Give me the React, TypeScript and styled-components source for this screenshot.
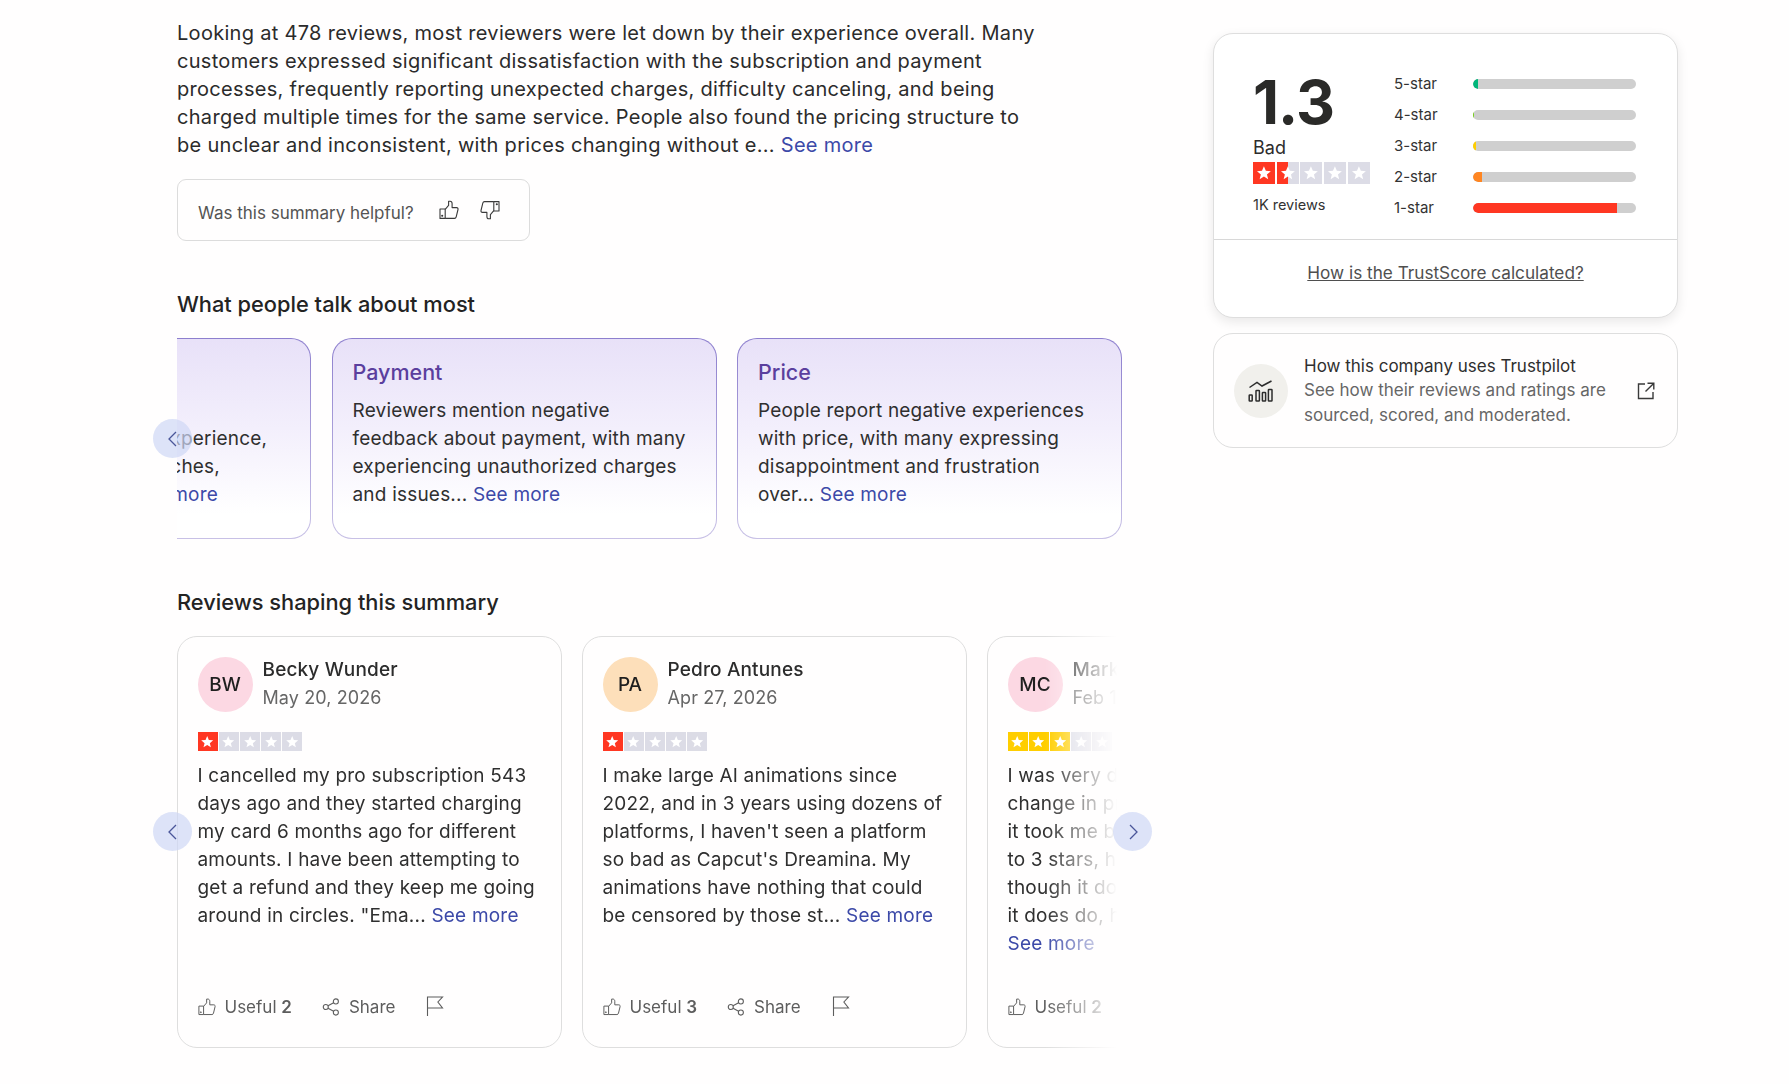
import React from "react";
import styled, { createGlobalStyle } from "styled-components";

const Global = createGlobalStyle`
  html, body { margin: 0; padding: 0; background: #fffefe; overflow: hidden; }
  body { font-family: Inter, "Liberation Sans", sans-serif; color: #2a2a2a; }
  * { box-sizing: border-box; }
`;

const Page = styled.div`
  display: flex;
  width: 1789px;
  height: 1084px;
  padding-left: 177px;
`;
const LeftColumn = styled.main`
  width: 945px;
  padding-top: 19px;
  flex: none;
`;
const RightColumn = styled.aside`
  width: 465px;
  margin-left: 91px;
  padding-top: 33px;
  flex: none;
`;
const Summary = styled.p`
  margin: 0;
  width: 866px;
  font-size: 20px;
  letter-spacing: 0.3px;
  line-height: 28px;
  color: #2b2b2b;
`;
const Link = styled.a`
  color: #3c49a8;
`;
const Feedback = styled.div`
  margin-top: 20px;
  width: 353px;
  height: 62px;
  border: 1px solid #dcdcdc;
  border-radius: 9px;
  display: flex;
  align-items: center;
  padding-left: 20px;
`;
const FeedbackText = styled.span`
  font-size: 17px;
  color: #545454;
  padding-top: 5px;
  width: 241px;
`;
const FeedbackIcon = styled.span`
  display: flex;
  width: 41px;
  color: #3a3a3a;
`;
const Heading = styled.h2`
  margin: 49px 0 0;
  font-size: 21.8px;
  line-height: 28px;
  font-weight: 500;
  color: #232323;
`;
const TopicViewport = styled.div`
  position: relative;
  margin-top: 20px;
  width: 947px;
`;
const TopicClip = styled.div`
  overflow: hidden;
`;
const TopicRow = styled.div`
  display: flex;
  gap: 20.5px;
  margin-left: -251px;
`;
const TopicCard = styled.article`
  flex: none;
  width: 385px;
  height: 201px;
  padding: 19px 20px 20px;
  border-radius: 20px;
  border: 1px solid transparent;
  background:
    linear-gradient(180deg, #e8e1f8 0%, #f3effc 45%, #ffffff 88%) padding-box,
    linear-gradient(180deg, #8d7fce 0%, #c8c1e6 100%) border-box;
`;
const TopicTitle = styled.h3`
  margin: 0;
  height: 28px;
  font-size: 21.5px;
  line-height: 28px;
  font-weight: 500;
  color: #5b3f9e;
`;
const TopicText = styled.p`
  margin: 11px 0 0;
  font-size: 19px;
  letter-spacing: 0.2px;
  line-height: 28px;
  color: #2f2f2f;
`;
const ClippedLine = styled.span<{ $width: number }>`
  display: block;
  width: ${(p) => p.$width}px;
  text-align: right;
  white-space: nowrap;
`;
const Arrow = styled.button<{ $side: "left" | "right"; $x: number; $y: number }>`
  position: absolute;
  ${(p) => p.$side}: ${(p) => p.$x}px;
  top: ${(p) => p.$y}px;
  width: 39px;
  height: 39px;
  border: 0;
  padding: 0;
  border-radius: 50%;
  background: rgba(206, 215, 245, 0.7);
  color: #4a5699;
  display: flex;
  align-items: center;
  justify-content: center;
`;
const ReviewViewport = styled.div`
  position: relative;
  margin-top: 20px;
`;
const ReviewClip = styled.div`
  width: 940px;
  overflow: hidden;
  -webkit-mask-image: linear-gradient(90deg, #000 0, #000 868px, transparent 940px);
  mask-image: linear-gradient(90deg, #000 0, #000 868px, transparent 940px);
`;
const ReviewRow = styled.div`
  display: flex;
  gap: 20px;
`;
const ReviewCard = styled.article`
  flex: none;
  width: 385px;
  height: 412px;
  border: 1px solid #dedede;
  border-radius: 20px;
  padding: 19px 19px 26px 19.5px;
  display: flex;
  flex-direction: column;
`;
const ReviewHeader = styled.header`
  display: flex;
  align-items: center;
  gap: 10px;
`;
const Avatar = styled.div<{ $bg: string }>`
  width: 55px;
  height: 55px;
  border-radius: 50%;
  background: ${(p) => p.$bg};
  display: flex;
  align-items: center;
  justify-content: center;
  font-size: 19px;
  font-weight: 500;
  color: #1f1f1f;
  flex: none;
`;
const Name = styled.div`
  font-size: 19px;
  letter-spacing: 0.15px;
  line-height: 28px;
  font-weight: 500;
  color: #2c2c2c;
  white-space: nowrap;
`;
const DateLine = styled.div`
  font-size: 18px;
  letter-spacing: 0.1px;
  line-height: 28px;
  color: #666;
  white-space: nowrap;
`;
const StarRow = styled.div<{ $size: number; $gap: number; $mt: number; $h: number }>`
  display: flex;
  gap: ${(p) => p.$gap}px;
  margin-top: ${(p) => p.$mt}px;
  & > div {
    width: ${(p) => p.$size}px;
    height: ${(p) => p.$h}px;
  }
`;
const StarBox = styled.div<{ $fill: string }>`
  background: ${(p) => p.$fill};
  display: flex;
  align-items: center;
  justify-content: center;
`;
const ReviewText = styled.p`
  margin: 11px 0 0;
  font-size: 19px;
  letter-spacing: 0.2px;
  line-height: 28px;
  color: #2f2f2f;
`;
const ReviewFooter = styled.footer`
  margin-top: auto;
  display: flex;
  align-items: center;
  height: 28px;
  font-size: 17px;
  color: #5d5d5d;
`;
const FooterAction = styled.span<{ $mr: number }>`
  display: flex;
  align-items: center;
  gap: 9px;
  margin-right: ${(p) => p.$mr}px;
  white-space: nowrap;
  & b {
    font-weight: 600;
  }
`;
const FlagIcon = styled.span`
  display: flex;
  margin-top: -3px;
`;
const ScoreCard = styled.section`
  height: 285px;
  border: 1px solid #dedede;
  border-radius: 20px;
  box-shadow: 0 4px 12px rgba(0, 0, 0, 0.09);
  background: #fff;
  display: flex;
  flex-direction: column;
`;
const ScoreTop = styled.div`
  height: 206px;
  border-bottom: 1px solid #d8d8d8;
  display: flex;
  padding-left: 39px;
`;
const ScoreLeft = styled.div`
  width: 141px;
  padding-top: 37px;
  flex: none;
`;
const ScoreValue = styled.div`
  font-size: 60.5px;
  line-height: 62px;
  font-weight: 700;
  letter-spacing: -1px;
  color: #2a2a28;
`;
const ScoreWord = styled.div`
  margin-top: 3px;
  font-size: 18px;
  line-height: 24px;
  color: #2c2c2c;
`;
const ScoreCount = styled.div`
  margin-top: 11px;
  font-size: 14.5px;
  line-height: 20px;
  color: #333;
`;
const Bars = styled.div`
  padding-top: 34px;
`;
const BarRow = styled.div`
  display: flex;
  align-items: center;
  height: 31px;
`;
const BarLabel = styled.span`
  width: 79px;
  font-size: 15px;
  color: #333;
`;
const BarTrack = styled.div`
  width: 163px;
  height: 10px;
  border-radius: 5px;
  background: #cfcfcf;
  overflow: hidden;
`;
const BarFill = styled.div<{ $color: string; $w: number }>`
  height: 100%;
  width: ${(p) => p.$w}px;
  background: ${(p) => p.$color};
  border-radius: 5px 0 0 5px;
`;
const ScoreLinkArea = styled.div`
  flex: 1;
  display: flex;
  align-items: center;
  justify-content: center;
  padding-bottom: 12px;
`;
const ScoreLink = styled.a`
  font-size: 17.2px;
  color: #4f4f4f;
  text-decoration: underline;
`;
const InfoCard = styled.section`
  margin-top: 15px;
  height: 115px;
  border: 1px solid #dedede;
  border-radius: 20px;
  display: flex;
  align-items: center;
  padding: 0 15px 0 20px;
`;
const InfoBadge = styled.div`
  width: 54px;
  height: 54px;
  border-radius: 50%;
  background: #f1f0ec;
  display: flex;
  align-items: center;
  justify-content: center;
  flex: none;
`;
const InfoText = styled.div`
  margin-left: 16px;
  width: 333px;
  flex: none;
  font-size: 17px;
  line-height: 24.5px;
  color: #666;
`;
const InfoTitle = styled.div`
  color: #2f2f2f;
`;
const InfoExternal = styled.span`
  display: flex;
  color: #3a3a3a;
`;

const Star = () => (
  <svg viewBox="0 0 24 24" width="72%" height="72%" fill="#fff">
    <path d="M12 1.8l2.9 7.1 7.6.5-5.9 4.9 1.9 7.4L12 17.6l-6.5 4.1 1.9-7.4L1.5 9.4l7.6-.5z" />
  </svg>
);

const Stars = ({ on, color, half, size, h, gap, mt }: { on: number; color: string; half?: boolean; size: number; h: number; gap: number; mt: number }) => (
  <StarRow $size={size} $h={h} $gap={gap} $mt={mt}>
    {[0, 1, 2, 3, 4].map((i) => (
      <StarBox
        key={i}
        $fill={
          i < on
            ? color
            : half && i === on
              ? `linear-gradient(90deg, ${color} 50%, #dcdce6 50%)`
              : "#dcdce6"
        }
      >
        <Star />
      </StarBox>
    ))}
  </StarRow>
);

const Thumb = ({ size = 20, down = false }: { size?: number; down?: boolean }) => (
  <svg
    viewBox="0 0 20 20"
    width={size}
    height={size}
    fill="none"
    stroke="currentColor"
    strokeWidth="1.1"
    strokeLinejoin="round"
    transform={down ? "rotate(180)" : undefined}
  >
    <path d="M1 9h5.2v9.4H1z" />
    <path d="M6.2 9.3L9.6 5.4V1.2h1.5c1.1 0 2 1 2 2.4V7.6h4.5c1 0 1.6.9 1.4 1.9l-1.8 7.4c-.2.9-.8 1.5-1.7 1.5H6.2" />
    <circle cx="3.2" cy="15.8" r=".5" fill="currentColor" />
  </svg>
);

const Share = () => (
  <svg viewBox="0 0 20 20" width="18" height="18" fill="none" stroke="#5d5d5d" strokeWidth="1.2">
    <circle cx="4.2" cy="10" r="2.8" />
    <circle cx="15.4" cy="3.8" r="2.8" />
    <circle cx="15.4" cy="16.2" r="2.8" />
    <path d="M6.7 8.7l6.2-3.5M6.7 11.3l6.2 3.5" />
  </svg>
);

const Flag = () => (
  <svg viewBox="0 0 18 20" width="18" height="20" fill="none" stroke="#5d5d5d" strokeWidth="1.1">
    <path d="M1.5 20V1h15l-4.6 5 4.6 6H1.5" />
  </svg>
);

const Chevron = ({ right = false }: { right?: boolean }) => (
  <svg viewBox="0 0 12 20" width="12" height="20" fill="none" stroke="currentColor" strokeWidth="1.3">
    <path d={right ? "M3 3l7 7-7 7" : "M9 3l-7 7 7 7"} />
  </svg>
);

const ChartIcon = () => (
  <svg viewBox="0 0 26 22" width="26" height="22" fill="none" stroke="#2c2c2c" strokeWidth="1.5">
    <path d="M1.5 7.5L9 2.5l5 3.5 9.5-5" />
    <rect x="1.2" y="15" width="3" height="6" rx="0.6" />
    <rect x="8" y="10.5" width="3.4" height="10.5" rx="0.6" />
    <rect x="14.4" y="12.5" width="3.2" height="8.5" rx="0.6" />
    <rect x="20.4" y="9.5" width="3.6" height="11.5" rx="0.6" />
  </svg>
);

const External = () => (
  <svg viewBox="0 0 18 18" width="18" height="18" fill="none" stroke="currentColor" strokeWidth="1.4">
    <path d="M8 2H1.5v14.5H16V10" />
    <path d="M10.5 1.2h6.3v6.3M16.6 1.4L8.5 9.5" />
  </svg>
);

const bars = [
  { label: "5-star", color: "#00b67a", w: 5 },
  { label: "4-star", color: "#73cf11", w: 1 },
  { label: "3-star", color: "#ffce00", w: 3 },
  { label: "2-star", color: "#ff8622", w: 9 },
  { label: "1-star", color: "#ff3722", w: 144 },
];

const Footer = ({ n }: { n: number }) => (
  <ReviewFooter>
    <FooterAction $mr={30}>
      <Thumb size={18} />
      <span>
        Useful <b>{n}</b>
      </span>
    </FooterAction>
    <FooterAction $mr={31}>
      <Share />
      <span>Share</span>
    </FooterAction>
    <FlagIcon>
      <Flag />
    </FlagIcon>
  </ReviewFooter>
);

export default function App() {
  return (
    <Page>
      <Global />
      <LeftColumn>
        <Summary>
          Looking at 478 reviews, most reviewers were let down by their experience overall. Many customers expressed
          significant dissatisfaction with the subscription and payment processes, frequently reporting unexpected
          charges, difficulty canceling, and being charged multiple times for the same service. People also found the
          pricing structure to be unclear and inconsistent, with prices changing without e... <Link>See more</Link>
        </Summary>
        <Feedback>
          <FeedbackText>Was this summary helpful?</FeedbackText>
          <FeedbackIcon>
            <Thumb />
          </FeedbackIcon>
          <FeedbackIcon>
            <Thumb down />
          </FeedbackIcon>
        </Feedback>
        <Heading>What people talk about most</Heading>
        <TopicViewport>
          <TopicClip>
            <TopicRow>
              <TopicCard>
                <TopicTitle>Experience</TopicTitle>
                <TopicText>
                  <ClippedLine $width={345}>&nbsp;</ClippedLine>
                  <ClippedLine $width={311}>Many share a negative experience,</ClippedLine>
                  <ClippedLine $width={273}>with frequent app glitches,</ClippedLine>
                  <ClippedLine $width={271}>
                    <Link>See more</Link>
                  </ClippedLine>
                </TopicText>
              </TopicCard>
              <TopicCard>
                <TopicTitle>Payment</TopicTitle>
                <TopicText>
                  Reviewers mention negative feedback about payment, with many experiencing unauthorized charges and
                  issues... <Link>See more</Link>
                </TopicText>
              </TopicCard>
              <TopicCard>
                <TopicTitle>Price</TopicTitle>
                <TopicText>
                  People report negative experiences with price, with many expressing disappointment and frustration
                  over... <Link>See more</Link>
                </TopicText>
              </TopicCard>
            </TopicRow>
          </TopicClip>
          <Arrow $side="left" $x={-24} $y={81} aria-label="Previous">
            <Chevron />
          </Arrow>
        </TopicViewport>
        <Heading>Reviews shaping this summary</Heading>
        <ReviewViewport>
          <ReviewClip>
            <ReviewRow>
              <ReviewCard>
                <ReviewHeader>
                  <Avatar $bg="#fcd8e3">BW</Avatar>
                  <div>
                    <Name>Becky Wunder</Name>
                    <DateLine>May 20, 2026</DateLine>
                  </div>
                </ReviewHeader>
                <Stars on={1} color="#ff3722" size={20} h={19} gap={1.2} mt={20} />
                <ReviewText>
                  I cancelled my pro subscription 543 days ago and they started charging my card 6 months ago for
                  different amounts. I have been attempting to get a refund and they keep me going around in circles.
                  "Ema... <Link>See more</Link>
                </ReviewText>
                <Footer n={2} />
              </ReviewCard>
              <ReviewCard>
                <ReviewHeader>
                  <Avatar $bg="#fddfba">PA</Avatar>
                  <div>
                    <Name>Pedro Antunes</Name>
                    <DateLine>Apr 27, 2026</DateLine>
                  </div>
                </ReviewHeader>
                <Stars on={1} color="#ff3722" size={20} h={19} gap={1.2} mt={20} />
                <ReviewText>
                  I make large AI animations since 2022, and in 3 years using dozens of platforms, I haven't seen a
                  platform so bad as Capcut's Dreamina. My animations have nothing that could be censored by those
                  st... <Link>See more</Link>
                </ReviewText>
                <Footer n={3} />
              </ReviewCard>
              <ReviewCard>
                <ReviewHeader>
                  <Avatar $bg="#fcd8e3">MC</Avatar>
                  <div>
                    <Name>Mark Collins</Name>
                    <DateLine>Feb 14, 2026</DateLine>
                  </div>
                </ReviewHeader>
                <Stars on={3} color="#ffce00" size={20} h={19} gap={1.2} mt={20} />
                <ReviewText>
                  I was very disappointed by the
                  <br />
                  change in pricing at renewal and
                  <br />
                  it took me by surprise, so I went
                  <br />
                  to 3 stars, however the app is good
                  <br />
                  though it doesn't do everything,
                  <br />
                  it does do, how it should.
                  <br />
                  <Link>See more</Link>
                </ReviewText>
                <Footer n={2} />
              </ReviewCard>
            </ReviewRow>
          </ReviewClip>
          <Arrow $side="left" $x={-24} $y={176} aria-label="Previous">
            <Chevron />
          </Arrow>
          <Arrow $side="right" $x={-30} $y={176} aria-label="Next">
            <Chevron right />
          </Arrow>
        </ReviewViewport>
      </LeftColumn>
      <RightColumn>
        <ScoreCard>
          <ScoreTop>
            <ScoreLeft>
              <ScoreValue>1.3</ScoreValue>
              <ScoreWord>Bad</ScoreWord>
              <Stars on={1} half color="#ff3722" size={22} h={22} gap={1.7} mt={2} />
              <ScoreCount>1K reviews</ScoreCount>
            </ScoreLeft>
            <Bars>
              {bars.map((b) => (
                <BarRow key={b.label}>
                  <BarLabel>{b.label}</BarLabel>
                  <BarTrack>
                    <BarFill $color={b.color} $w={b.w} />
                  </BarTrack>
                </BarRow>
              ))}
            </Bars>
          </ScoreTop>
          <ScoreLinkArea>
            <ScoreLink>How is the TrustScore calculated?</ScoreLink>
          </ScoreLinkArea>
        </ScoreCard>
        <InfoCard>
          <InfoBadge>
            <ChartIcon />
          </InfoBadge>
          <InfoText>
            <InfoTitle>How this company uses Trustpilot</InfoTitle>
            See how their reviews and ratings are sourced, scored, and moderated.
          </InfoText>
          <InfoExternal>
            <External />
          </InfoExternal>
        </InfoCard>
      </RightColumn>
    </Page>
  );
}
